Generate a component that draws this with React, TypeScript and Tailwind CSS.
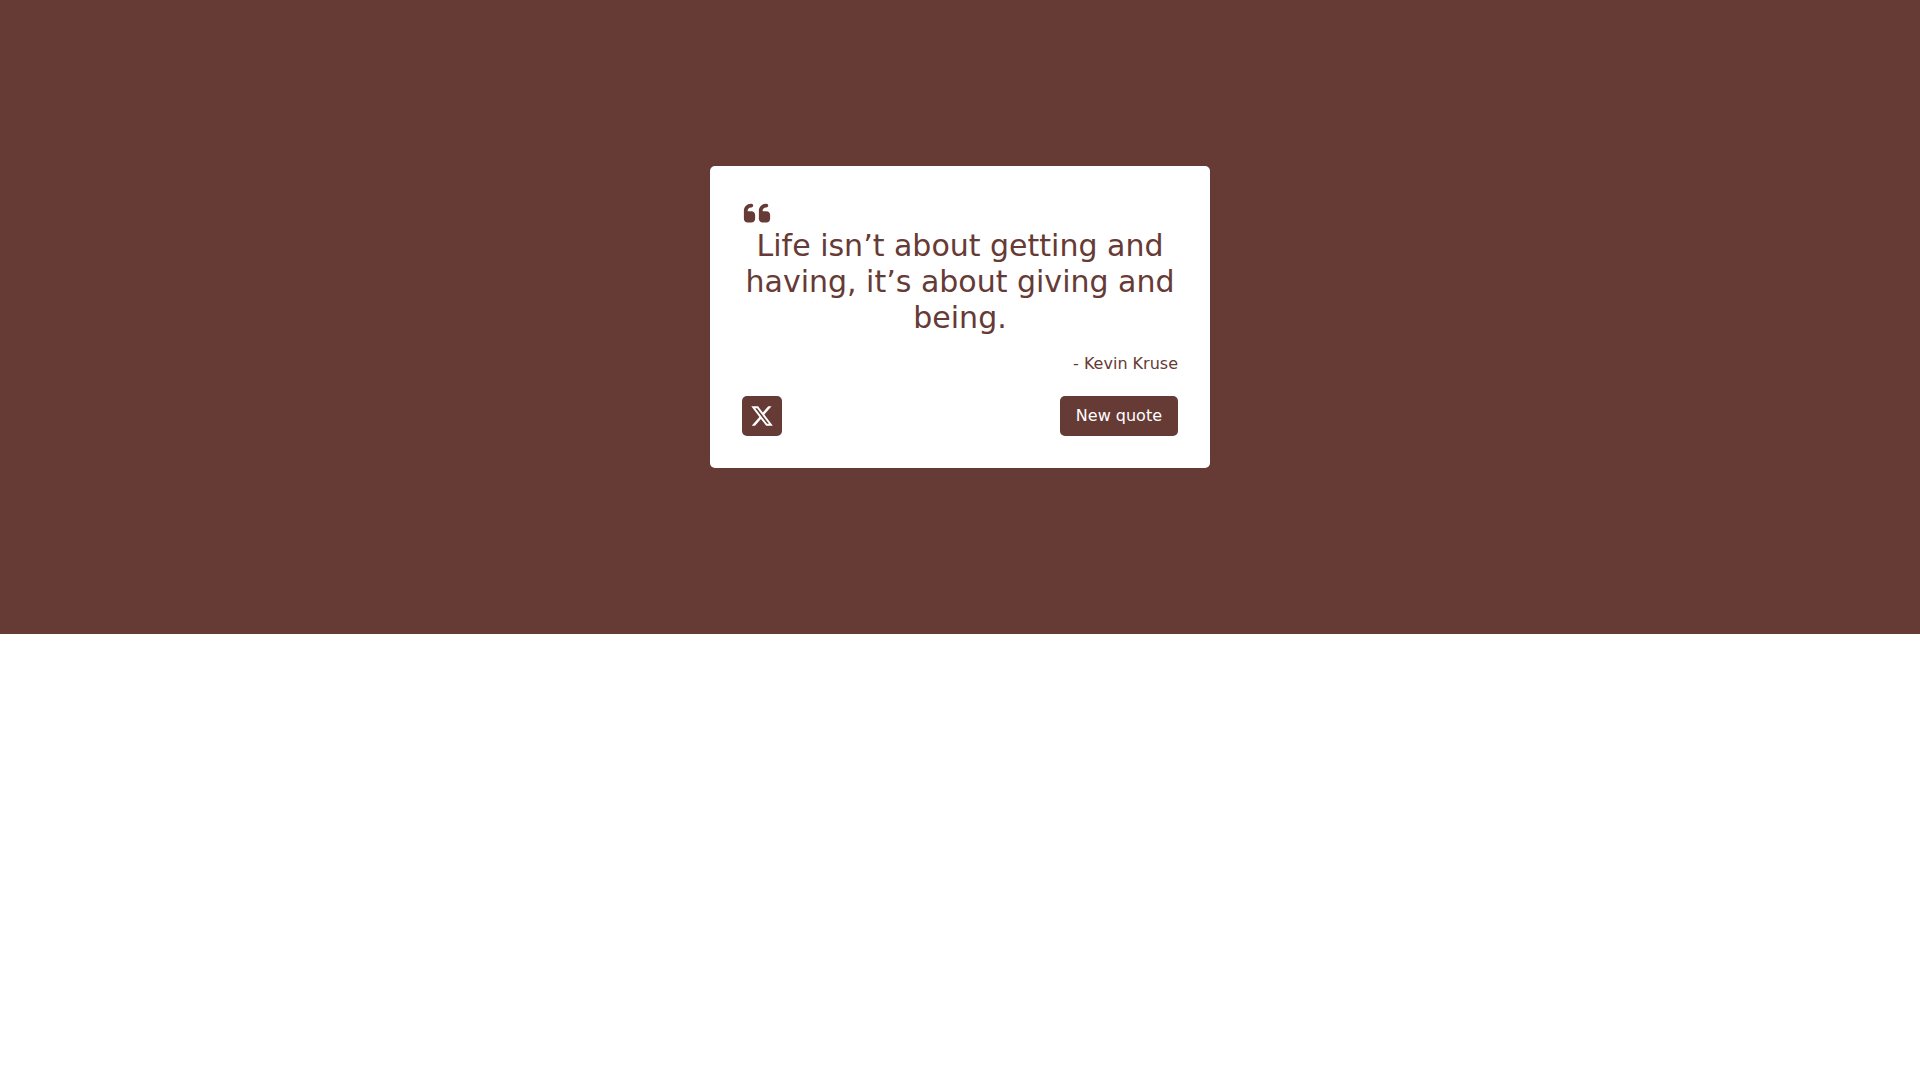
import { FaQuoteLeft, FaXTwitter } from 'react-icons/fa6';

const quote = {
  text: 'Life isn’t about getting and having, it’s about giving and being.',
  author: 'Kevin Kruse',
};

export default function App() {
  return (
    <main className="flex justify-center bg-[#663a35] px-4 py-[166px] font-['DejaVu_Sans',sans-serif] text-[#663a35]">
      <div id="quote-box" className="w-full max-w-[500px] rounded-[5px] bg-white p-8">
        <FaQuoteLeft className="size-[30px]" />
        <p id="text" className="text-center text-3xl">
          {quote.text}
        </p>
        <p id="author" className="mt-4 text-right">
          - {quote.author}
        </p>
        <div className="mt-5 flex items-center justify-between">
          <a
            id="tweet-quote"
            href="#tweet"
            aria-label="Share on X"
            className="flex size-10 items-center justify-center rounded-[5px] bg-[#663a35] text-white"
          >
            <FaXTwitter className="size-6" />
          </a>
          <button id="new-quote" type="button" className="h-10 rounded-[5px] bg-[#663a35] px-4 text-white">
            New quote
          </button>
        </div>
      </div>
    </main>
  );
}
